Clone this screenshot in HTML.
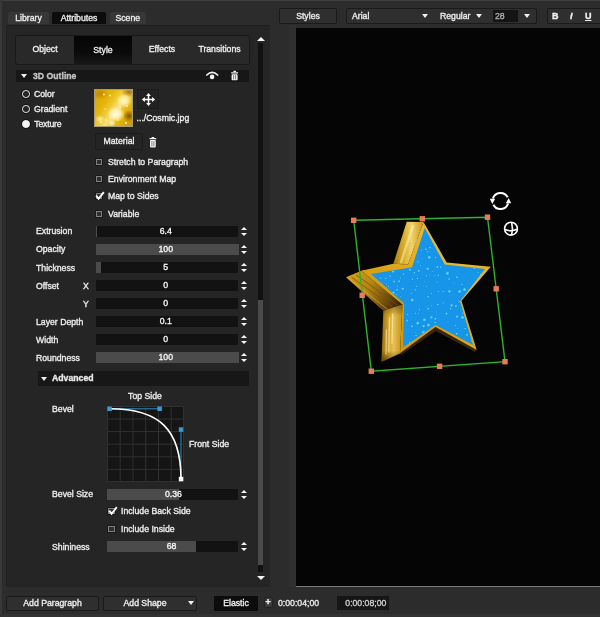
<!DOCTYPE html>
<html><head><meta charset="utf-8">
<style>
*{margin:0;padding:0;box-sizing:border-box}
html,body{width:600px;height:617px;overflow:hidden;background:#2c2c2c}
body{position:relative;font-family:"Liberation Sans",Arial,sans-serif;font-size:8.7px;color:#ececec;-webkit-font-smoothing:antialiased}
.a{position:absolute}
.t{position:absolute;white-space:nowrap;line-height:12px;height:12px}
.c{text-align:center}
.tab{position:absolute;top:12px;height:12px;background:#373737;border-radius:2px 2px 0 0;text-align:center;line-height:13px}
.btn{position:absolute;background:#2f2f2f;border:1px solid #1a1a1a;border-radius:2px;text-align:center}
.fld{position:absolute;left:95.5px;width:142.5px;height:11px;background:#121212}
.fld i{position:absolute;left:0;top:0;height:11px;background:#4b4b4b;display:block}
.fld b{position:absolute;left:0;right:2px;top:0;line-height:11.4px;text-align:center;font-weight:normal;color:#f4f4f4}
.sp{position:absolute;left:241px;width:8px;height:10px}
.sp:before{content:"";position:absolute;left:.2px;top:0;border-left:3.8px solid transparent;border-right:3.8px solid transparent;border-bottom:3.7px solid #f4f4f4}
.sp:after{content:"";position:absolute;left:.2px;top:6px;border-left:3.8px solid transparent;border-right:3.8px solid transparent;border-top:3.7px solid #f4f4f4}
.cb{position:absolute;width:6.5px;height:6px;border:1px solid #808080;background:#2e2e2e;box-shadow:0 0 0 .6px #111}
.rd{position:absolute;width:7.6px;height:7.6px;border:1.3px solid #eee;border-radius:50%;box-shadow:0 0 0 .7px #0c0c0c}
#w{position:absolute;left:0;top:0;width:600px;height:617px;will-change:transform;-webkit-text-stroke:.35px}
</style></head><body><div id="w">
<div class="a" style="left:0;top:0;width:600px;height:1px;background:#3e3e3e"></div><div class="a" style="left:0;top:0;width:1.5px;height:617px;background:#383838"></div><div class="a" style="left:0;top:614px;width:600px;height:3px;background:#323232"></div>
<!-- left panel -->
<div class="a" style="left:6px;top:24.5px;width:264px;height:562.5px;background:#252525;border-top:1px solid #1e1e1e;border-left:1px solid #202020"></div>
<div class="tab" style="left:8px;width:41px;">Library</div>
<div class="tab" style="left:52px;width:54px;background:#0c0c0c">Attributes</div>
<div class="tab" style="left:110px;width:35.5px;">Scene</div>
<!-- subtabs -->
<div class="a" style="left:15px;top:35px;width:235px;height:30px;background:#292929;border:1px solid #181818;border-radius:3px"></div>
<div class="a" style="left:74px;top:36px;width:58px;height:28px;background:linear-gradient(#050505,#0b0b0b 60%,#171717)"></div>
<div class="t c" style="left:16px;width:58px;top:43px">Object</div>
<div class="t c" style="left:74px;width:58px;top:44px">Style</div>
<div class="t c" style="left:133px;width:58px;top:43px">Effects</div>
<div class="t c" style="left:190px;width:59px;top:43px">Transitions</div>
<!-- section header -->
<div class="a" style="left:16px;top:70px;width:233px;height:12px;background:#171717"></div>
<div class="a" style="left:21px;top:74px;border-left:3px solid transparent;border-right:3px solid transparent;border-top:4px solid #eee"></div>
<div class="t" style="left:33px;top:70px;font-weight:bold;color:#c2c2c2">3D Outline</div>
<svg class="a" style="left:205px;top:69px" width="40" height="13" viewBox="205 69 40 13">
<path d="M206.8,75 Q212.2,69.6 217.6,75" stroke="#f2f2f2" stroke-width="1.7" fill="none" stroke-linecap="round"/><circle cx="212.1" cy="76.9" r="2.3" fill="#f2f2f2"/>
<path d="M231.2,72.8h6.8M233.4,71.4h2.6" stroke="#f2f2f2" stroke-width="1.2" fill="none"/><rect x="231.6" y="74.2" width="6" height="6" rx=".8" fill="#f2f2f2"/><path d="M233.6,75v4.4M235.6,75v4.4" stroke="#555" stroke-width=".7"/>
</svg>
<!-- radios -->
<div class="rd" style="left:22px;top:90.4px"></div><div class="t" style="left:34px;top:88px">Color</div>
<div class="rd" style="left:22px;top:105.2px"></div><div class="t" style="left:34px;top:103px">Gradient</div>
<div class="rd" style="left:22px;top:120.2px;background:#f4f4f4"></div><div class="t" style="left:34.3px;top:118px;letter-spacing:-.2px">Texture</div>
<!-- thumb -->
<div class="a" style="left:94px;top:89px;width:39px;height:38px;border:1px solid #a89c78;background:
radial-gradient(ellipse 9px 8px at 21px 24px,#fffce4 0,rgba(255,246,190,.85) 50%,rgba(255,236,140,0) 100%),
radial-gradient(ellipse 8px 7px at 29px 11px,#fff8d0 0,rgba(255,240,160,.8) 50%,rgba(255,230,120,0) 100%),
radial-gradient(ellipse 4px 4px at 17px 33px,rgba(255,248,200,.95) 0,rgba(255,230,120,0) 100%),
radial-gradient(ellipse 5px 4px at 5px 29px,rgba(255,240,170,.9) 0,rgba(255,230,120,0) 100%),
radial-gradient(ellipse 6px 6px at 34px 26px,rgba(125,80,0,.95) 0,rgba(150,100,0,.5) 60%,rgba(150,100,0,0) 100%),
radial-gradient(ellipse 8px 5px at 34px 2px,rgba(150,100,0,.9) 0,rgba(150,100,0,0) 100%),
radial-gradient(ellipse 9px 6px at 5px 4px,rgba(190,130,0,.8) 0,rgba(190,130,0,0) 100%),
linear-gradient(125deg,#d8a000 0,#e4b60a 30%,#f0cc3c 45%,#f8e07a 56%,#e6b814 70%,#cc9800 100%)"></div>
<svg class="a" style="left:94px;top:89px" width="39" height="38" viewBox="0 0 39 38" fill="#fff4b8">
<circle cx="10" cy="5.5" r="1"/><circle cx="16" cy="6.5" r=".9"/><circle cx="32" cy="34" r="1"/><circle cx="7" cy="33" r=".9"/><circle cx="12" cy="31" r=".9"/><circle cx="26" cy="18" r="1.1"/><circle cx="11" cy="20" r=".7"/><circle cx="33" cy="17" r=".9"/><circle cx="24" cy="31" r=".8"/>
</svg>
<div class="a" style="left:137px;top:89px;width:22px;height:20px;background:#222;border:1px solid #1b1b1b;border-radius:1px"></div>
<svg class="a" style="left:140px;top:91px" width="17" height="17" viewBox="-8.5 -8.5 17 17">
<path d="M-4.2,0H4.2M0,-4.2V4.2" stroke="#fff" stroke-width="1.5" fill="none"/>
<path d="M-6.6,0L-3.6,-2.4V2.4ZM6.6,0L3.6,-2.4V2.4ZM0,-6.6L-2.4,-3.6H2.4ZM0,6.6L-2.4,3.6H2.4Z" fill="#fff"/>
</svg>
<div class="t" style="left:136.6px;top:112px">.../Cosmic.jpg</div>
<div class="btn" style="left:95px;top:133px;width:48px;height:17px;line-height:15px;background:#242424;border-color:#1b1b1b">Material</div>
<svg class="a" style="left:148px;top:136px" width="10" height="13" viewBox="0 0 10 13"><path d="M1.6,2.6h6.6M3.6,1.6h2.6" stroke="#f2f2f2" stroke-width="1.1" fill="none"/><rect x="2" y="4" width="5.8" height="7.4" rx=".8" fill="#f2f2f2"/><path d="M3.9,5v5.4M5.9,5v5.4" stroke="#555" stroke-width=".7"/></svg>
<!-- checkboxes -->
<div class="cb" style="left:95.5px;top:158.5px"></div><div class="t" style="left:108px;top:156px">Stretch to Paragraph</div>
<div class="cb" style="left:95.5px;top:176px"></div><div class="t" style="left:108px;top:173px">Environment Map</div>
<div class="cb" style="left:95.5px;top:193px"></div><svg class="a" style="left:94.8px;top:191px" width="11" height="10" viewBox="0 0 11 10"><path d="M1.2,4.6L3.6,7.8L8.8,1.2" stroke="#fff" stroke-width="1.9" fill="none"/></svg><div class="t" style="left:108px;top:190px">Map to Sides</div>
<div class="cb" style="left:95.5px;top:210.5px"></div><div class="t" style="left:108px;top:208px">Variable</div>
<!-- rows -->
<div class="t" style="left:36px;top:225px">Extrusion</div><div class="fld" style="top:226px"><i style="width:1px"></i><b>6.4</b></div><div class="sp" style="top:227px"></div>
<div class="t" style="left:36px;top:243px">Opacity</div><div class="fld" style="top:244px"><i style="width:143px"></i><b>100</b></div><div class="sp" style="top:245px"></div>
<div class="t" style="left:36px;top:262px">Thickness</div><div class="fld" style="top:262px"><i style="width:5px"></i><b>5</b></div><div class="sp" style="top:263px"></div>
<div class="t" style="left:36px;top:280px">Offset</div><div class="t" style="left:83px;top:280px">X</div><div class="fld" style="top:280px"><b>0</b></div><div class="sp" style="top:281px"></div>
<div class="t" style="left:83px;top:298px">Y</div><div class="fld" style="top:298px"><b>0</b></div><div class="sp" style="top:299px"></div>
<div class="t" style="left:36px;top:316px">Layer Depth</div><div class="fld" style="top:316px"><b>0.1</b></div><div class="sp" style="top:317px"></div>
<div class="t" style="left:36px;top:334px">Width</div><div class="fld" style="top:334px"><b>0</b></div><div class="sp" style="top:335px"></div>
<div class="t" style="left:36px;top:352px">Roundness</div><div class="fld" style="top:352px"><i style="width:143px"></i><b>100</b></div><div class="sp" style="top:353px"></div>
<!-- advanced -->
<div class="a" style="left:38px;top:371px;width:211px;height:15px;background:#171717"></div>
<div class="a" style="left:41px;top:377px;border-left:3px solid transparent;border-right:3px solid transparent;border-top:4px solid #eee"></div>
<div class="t" style="left:52px;top:372px;font-weight:bold;color:#e8e8e8">Advanced</div>
<div class="t" style="left:52px;top:403px">Bevel</div>
<div class="t c" style="left:115px;width:60px;top:390px">Top Side</div>
<div class="t" style="left:189px;top:438px">Front Side</div>
<svg class="a" style="left:100px;top:400px" width="100" height="90" viewBox="100 400 100 90">
<rect x="107" y="406" width="76.5" height="75.5" fill="#151515"/>
<g stroke="#303030" stroke-width="1" fill="none">
<path d="M107.5,406v75.5M120.2,406v75.5M133,406v75.5M145.7,406v75.5M158.5,406v75.5M171.2,406v75.5M183.5,406v75.5"/>
<path d="M107,406.5h76.5M107,419h76.5M107,431.6h76.5M107,444.2h76.5M107,456.8h76.5M107,469.4h76.5M107,481.5h76.5"/>
</g>
<path d="M109.5,408.8H159.6M181,429.5V479" stroke="#2f8fc0" stroke-width="1" fill="none"/>
<path d="M109.5,408.8 C159.6,408.8 181,429.5 181,479" stroke="#fff" stroke-width="1.6" fill="none"/>
<rect x="107.3" y="406.5" width="4.5" height="4.5" fill="#3a9ccc"/>
<rect x="157.4" y="406.5" width="4.5" height="4.5" fill="#3a9ccc"/>
<rect x="178.8" y="427.3" width="4.5" height="4.5" fill="#3a9ccc"/>
<rect x="178.8" y="476.8" width="4.5" height="4.5" fill="#fff"/>
</svg>
<div class="t" style="left:52px;top:488px">Bevel Size</div><div class="fld" style="top:489px;left:107px;width:131px"><i style="width:72px"></i><b style="left:2px;right:0">0.36</b></div><div class="sp" style="top:490px"></div>
<div class="cb" style="left:108.3px;top:507.5px"></div><svg class="a" style="left:107.6px;top:505.5px" width="11" height="10" viewBox="0 0 11 10"><path d="M1.2,4.6L3.6,7.8L8.8,1.2" stroke="#fff" stroke-width="1.9" fill="none"/></svg><div class="t" style="left:121px;top:505px">Include Back Side</div>
<div class="cb" style="left:108.3px;top:526px"></div><div class="t" style="left:121px;top:523px">Include Inside</div>
<div class="t" style="left:52px;top:541px">Shininess</div><div class="fld" style="top:541px;left:107px;width:131px"><i style="width:89px"></i><b>68</b></div><div class="sp" style="top:542px"></div>
<!-- scrollbar -->
<div class="a" style="left:258px;top:43px;width:5px;height:529px;background:#111"></div>
<div class="a" style="left:258px;top:300px;width:5px;height:265px;background:#4a4a4a"></div>
<div class="a" style="left:256.7px;top:36.5px;border-left:4px solid transparent;border-right:4px solid transparent;border-bottom:4.4px solid #f4f4f4"></div>
<div class="a" style="left:256.7px;top:575.5px;border-left:4px solid transparent;border-right:4px solid transparent;border-top:4.4px solid #f4f4f4"></div>
<!-- top toolbar -->
<div class="btn" style="left:279px;top:8px;width:58px;height:16px;line-height:14px">Styles</div>
<div class="btn" style="left:346px;top:8px;width:191px;height:16px"></div>
<div class="t" style="left:352px;top:10px">Arial</div>
<div class="a" style="left:422px;top:14px;border-left:3.5px solid transparent;border-right:3.5px solid transparent;border-top:4px solid #f0f0f0"></div>
<div class="t" style="left:440px;top:10px">Regular</div>
<div class="a" style="left:476px;top:14px;border-left:3.5px solid transparent;border-right:3.5px solid transparent;border-top:4px solid #f0f0f0"></div>
<div class="a" style="left:493px;top:10px;width:25px;height:12px;background:#141414"></div>
<div class="t" style="left:495px;top:10px;color:#aaa">28</div>
<div class="a" style="left:524px;top:14px;border-left:3.5px solid transparent;border-right:3.5px solid transparent;border-top:4px solid #f0f0f0"></div>
<div class="btn" style="left:547px;top:8px;width:60px;height:16px"></div>
<div class="t" style="left:552px;top:10px;font-weight:bold;font-size:9px">B</div>
<div class="t" style="left:570px;top:10px;font-weight:bold;font-style:italic;font-size:9px">I</div>
<div class="t" style="left:585px;top:10px;font-weight:bold;font-size:9px;text-decoration:underline">U</div>
<div class="a" style="left:289px;top:25px;width:7px;height:562px;background:#303030"></div>
<!-- preview -->
<div class="a" style="left:296px;top:28px;width:304px;height:559px;background:#050505"></div>
<!-- star -->
<svg class="a" style="left:0;top:0" width="600" height="617" viewBox="0 0 600 617">
<defs>
<linearGradient id="gR" x1="360" y1="350" x2="490" y2="225" gradientUnits="userSpaceOnUse"><stop offset="0" stop-color="#c98f0e"/><stop offset=".45" stop-color="#dea516"/><stop offset=".7" stop-color="#eab830"/><stop offset="1" stop-color="#e2a91c"/></linearGradient>
<linearGradient id="gS" x1="0" y1="305" x2="0" y2="362" gradientUnits="userSpaceOnUse"><stop offset="0" stop-color="#3a2400" stop-opacity=".45"/><stop offset=".2" stop-color="#3a2400" stop-opacity="0"/><stop offset=".8" stop-color="#3a2400" stop-opacity="0"/><stop offset="1" stop-color="#3a2400" stop-opacity=".6"/></linearGradient>
<linearGradient id="gA" x1="0" y1="0" x2="1" y2="0"><stop offset="0" stop-color="#a87c10"/><stop offset=".35" stop-color="#d9ae2c"/><stop offset=".6" stop-color="#f0d36a"/><stop offset="1" stop-color="#c9971a"/></linearGradient>
<linearGradient id="gC" x1="346" y1="277" x2="400" y2="308" gradientUnits="userSpaceOnUse"><stop offset="0" stop-color="#d4a21c"/><stop offset=".4" stop-color="#b48614"/><stop offset=".75" stop-color="#6e4c0c"/><stop offset="1" stop-color="#2e1e04"/></linearGradient>
<linearGradient id="gD" x1="382" y1="0" x2="403" y2="0" gradientUnits="userSpaceOnUse"><stop offset="0" stop-color="#9a700c"/><stop offset=".3" stop-color="#d2a428"/><stop offset=".55" stop-color="#e6c253"/><stop offset="1" stop-color="#c08c10"/></linearGradient>
<radialGradient id="gd" cx=".45" cy=".38" r=".62"><stop offset="0" stop-color="#7ddcfb"/><stop offset=".55" stop-color="#3dbbf2"/><stop offset="1" stop-color="#157fca"/></radialGradient>
<clipPath id="cb"><polygon points="424.7,228 444.8,264.6 485,268.9 460,301.3 473,345 435.5,325 403,347.5 404,303.5 371,274 412,267.3"/></clipPath>
</defs>
<!-- bottom shadow faces -->
<polygon points="435.5,327 476.7,350 475,352 435.8,331 401,355 400,353.3" fill="#3a2604"/>
<!-- side faces -->
<polygon points="423.5,222 406.7,221.7 393.3,263.8 408,264.5" fill="url(#gA)"/>
<polygon points="408,264.5 393.3,263.8 361.3,270.7 371,274" fill="#d8a820"/>
<polygon points="361.3,270.7 346,277.3 383.3,310.7 402.5,304.5" fill="url(#gC)"/>
<polygon points="402.5,304.5 383.3,310.7 381.5,361.8 400,353.6" fill="url(#gD)"/><polygon points="402.5,304.5 383.3,310.7 381.5,361.8 400,353.6" fill="url(#gS)"/>
<g fill="none" stroke-linecap="round">
<path d="M352,277.5L392,306.5M357,275.5L397,304.8" stroke="#7a560a" stroke-width="1.2" opacity=".55"/>
<path d="M349,279L387,309" stroke="#e8c450" stroke-width="1" opacity=".5"/>
<path d="M389.5,318L388.8,352M392.6,314L392,343M386.4,330L386,354" stroke="#fff3c0" stroke-width="1.3" opacity=".6"/>
<path d="M413,226L401,262" stroke="#fff6d0" stroke-width="2.4" opacity=".45"/>
<path d="M417.5,240L412,259" stroke="#fffbe8" stroke-width="1.6" opacity=".7"/>
</g>
<!-- front rim -->
<polygon points="423.5,222 446.7,262.5 490.8,266.7 461.5,300.8 476.7,350 435.5,327 400,353.3 402.5,304.5 361.3,270.7 408,264.5" fill="url(#gR)"/>
<!-- blue -->
<polygon points="424.7,228 444.8,264.6 485,268.9 460,301.3 473,345 435.5,325 403,347.5 404,303.5 371,274 412,267.3" fill="#1795e8"/>
<g clip-path="url(#cb)" fill="url(#gd)"><circle cx="432.6" cy="271.9" r="0.6"/><circle cx="380.9" cy="278.2" r="0.9"/><circle cx="396.4" cy="294.8" r="0.8"/><circle cx="437.9" cy="304.7" r="1.1"/><circle cx="449.2" cy="279.3" r="1.1"/><circle cx="427.9" cy="269.2" r="1.6"/><circle cx="404.1" cy="345.6" r="0.7"/><circle cx="429.9" cy="247.8" r="1.1"/><circle cx="388.5" cy="286.7" r="0.6"/><circle cx="435.2" cy="322.7" r="1.1"/><circle cx="410.1" cy="270.0" r="1.6"/><circle cx="437.7" cy="282.7" r="0.7"/><circle cx="451.7" cy="305.7" r="1.6"/><circle cx="403.7" cy="274.3" r="1.1"/><circle cx="416.0" cy="332.6" r="0.7"/><circle cx="390.1" cy="276.2" r="1.0"/><circle cx="418.8" cy="271.1" r="1.3"/><circle cx="397.8" cy="286.2" r="0.8"/><circle cx="430.3" cy="302.1" r="0.6"/><circle cx="423.5" cy="332.5" r="1.9"/><circle cx="416.1" cy="275.9" r="0.7"/><circle cx="426.4" cy="276.1" r="0.9"/><circle cx="457.2" cy="316.8" r="1.6"/><circle cx="405.3" cy="305.2" r="0.7"/><circle cx="459.8" cy="291.9" r="1.9"/><circle cx="397.1" cy="290.1" r="1.1"/><circle cx="461.9" cy="284.7" r="0.9"/><circle cx="426.1" cy="306.4" r="0.7"/><circle cx="415.7" cy="313.4" r="0.9"/><circle cx="426.0" cy="249.4" r="1.1"/><circle cx="454.0" cy="283.6" r="0.7"/><circle cx="411.3" cy="293.8" r="0.8"/><circle cx="400.8" cy="278.3" r="0.8"/><circle cx="464.7" cy="290.0" r="1.9"/><circle cx="449.5" cy="291.7" r="1.6"/><circle cx="435.4" cy="257.8" r="1.0"/><circle cx="402.9" cy="289.0" r="1.6"/><circle cx="429.4" cy="257.7" r="1.9"/><circle cx="471.8" cy="341.1" r="1.0"/><circle cx="394.3" cy="281.7" r="1.3"/><circle cx="385.0" cy="281.1" r="0.7"/><circle cx="448.0" cy="322.1" r="0.8"/><circle cx="386.8" cy="284.1" r="0.7"/><circle cx="416.8" cy="286.5" r="0.9"/><circle cx="417.4" cy="278.6" r="1.1"/><circle cx="407.6" cy="314.7" r="0.6"/><circle cx="409.9" cy="283.0" r="0.6"/><circle cx="415.2" cy="290.1" r="1.0"/><circle cx="385.9" cy="278.7" r="1.0"/><circle cx="436.6" cy="312.1" r="0.7"/><circle cx="443.3" cy="291.7" r="0.9"/><circle cx="399.3" cy="281.6" r="1.3"/><circle cx="447.5" cy="273.7" r="1.9"/><circle cx="438.5" cy="275.3" r="1.0"/><circle cx="438.3" cy="291.5" r="0.8"/><circle cx="446.6" cy="313.9" r="1.3"/><circle cx="467.1" cy="335.0" r="1.3"/><circle cx="455.4" cy="325.5" r="0.8"/><circle cx="462.8" cy="313.3" r="0.9"/><circle cx="414.3" cy="282.2" r="0.6"/><circle cx="443.2" cy="303.1" r="0.9"/><circle cx="462.7" cy="317.8" r="1.9"/><circle cx="431.5" cy="317.5" r="1.6"/><circle cx="459.2" cy="302.0" r="0.9"/><circle cx="406.0" cy="296.1" r="0.6"/><circle cx="426.5" cy="286.3" r="0.7"/><circle cx="450.6" cy="309.1" r="1.0"/><circle cx="424.6" cy="320.1" r="1.9"/><circle cx="423.8" cy="326.4" r="1.6"/><circle cx="412.3" cy="300.4" r="1.9"/><circle cx="457.3" cy="328.7" r="0.7"/><circle cx="412.5" cy="279.4" r="1.0"/><circle cx="407.3" cy="320.8" r="1.3"/><circle cx="456.0" cy="306.3" r="1.3"/><circle cx="435.1" cy="275.3" r="0.8"/><circle cx="428.6" cy="325.4" r="1.9"/><circle cx="400.7" cy="296.4" r="0.6"/><circle cx="457.2" cy="277.5" r="1.3"/><circle cx="428.3" cy="296.9" r="1.1"/><circle cx="420.7" cy="265.4" r="0.6"/><circle cx="424.8" cy="281.9" r="0.7"/><circle cx="431.5" cy="293.6" r="0.6"/><circle cx="428.3" cy="308.9" r="1.3"/><circle cx="419.4" cy="309.9" r="0.9"/><circle cx="428.0" cy="252.0" r="0.9"/><circle cx="418.8" cy="313.2" r="0.8"/><circle cx="416.2" cy="335.8" r="1.1"/><circle cx="478.1" cy="267.5" r="0.8"/><circle cx="414.5" cy="272.9" r="1.1"/><circle cx="421.9" cy="241.1" r="0.7"/><circle cx="403.2" cy="270.2" r="0.7"/><circle cx="435.5" cy="319.1" r="1.3"/><circle cx="412.0" cy="326.6" r="1.3"/><circle cx="393.5" cy="293.0" r="1.6"/><circle cx="393.2" cy="271.7" r="1.6"/><circle cx="474.3" cy="268.7" r="1.0"/><circle cx="409.5" cy="342.5" r="0.6"/><circle cx="480.7" cy="274.4" r="1.0"/><circle cx="386.3" cy="287.6" r="0.6"/><circle cx="440.8" cy="267.3" r="1.1"/><circle cx="429.9" cy="275.0" r="0.8"/><circle cx="421.5" cy="250.3" r="0.9"/><circle cx="437.5" cy="267.2" r="1.3"/><circle cx="431.5" cy="306.0" r="0.7"/><circle cx="465.2" cy="328.9" r="1.1"/><circle cx="478.0" cy="272.7" r="0.8"/><circle cx="422.6" cy="259.2" r="0.6"/><circle cx="417.9" cy="323.5" r="1.9"/><circle cx="418.1" cy="262.0" r="1.0"/><circle cx="456.7" cy="334.0" r="1.3"/></g>
<!-- bbox -->
<polygon points="353.7,220.3 487.5,217.2 505,361.7 371.3,371.2" fill="none" stroke="#2db32d" stroke-width="1.4"/>
<g fill="#ea7b5a">
<rect x="351" y="217.6" width="5.4" height="5.4"/><rect x="419.6" y="216.1" width="5.4" height="5.4"/><rect x="484.8" y="214.5" width="5.4" height="5.4"/>
<rect x="359.5" y="292.6" width="5.4" height="5.4"/><rect x="493.5" y="286.1" width="5.4" height="5.4"/>
<rect x="368.6" y="368.5" width="5.4" height="5.4"/><rect x="436.9" y="363.6" width="5.4" height="5.4"/><rect x="502.3" y="359" width="5.4" height="5.4"/>
</g>
<!-- rotate icon -->
<g fill="none" stroke="#fff" stroke-width="2.1">
<path d="M507.6,197.3 A8,8 0 0 0 492.9,198.5"/>
<path d="M493.4,204.7 A8,8 0 0 0 508.1,203.5"/>
</g>
<polygon points="489.8,198.8 495.2,198.8 492.3,204" fill="#fff"/>
<polygon points="511.2,203.2 505.8,203.2 508.7,198" fill="#fff"/>
<!-- globe -->
<g fill="none" stroke="#fff" stroke-width="1.6">
<circle cx="511" cy="228.7" r="6.4"/>
<path d="M511.6,222.3 Q513.3,228.7 511.6,235.1"/>
<path d="M504.7,229.6 Q511,232 517.3,229.3"/>
</g>
</svg>
<!-- bottom -->
<div class="btn" style="left:6px;top:596px;width:93px;height:15px;line-height:13px">Add Paragraph</div>
<div class="btn" style="left:103px;top:596px;width:94px;height:15px;line-height:13px;padding-right:10px">Add Shape</div>
<div class="a" style="left:188px;top:601px;border-left:3.5px solid transparent;border-right:3.5px solid transparent;border-top:4px solid #f0f0f0"></div>
<div class="a" style="left:296px;top:586px;width:304px;height:1px;background:#7a7a7a"></div>
<div class="a" style="left:214px;top:596px;width:44px;height:15px;background:#0c0c0c;text-align:center;line-height:15px">Elastic</div>
<div class="btn" style="left:263.5px;top:597px;width:9.5px;height:11px;background:#3a3a3a;border-color:#222;line-height:8.5px;font-size:9px;font-weight:bold">+</div>
<div class="t" style="left:278px;top:597px">0:00:04;00</div>
<div class="a" style="left:337px;top:596px;width:52px;height:14px;background:#161616"></div>
<div class="t" style="left:345.3px;top:597px;color:#cfcfcf">0:00:08;00</div>
</div></body></html>
